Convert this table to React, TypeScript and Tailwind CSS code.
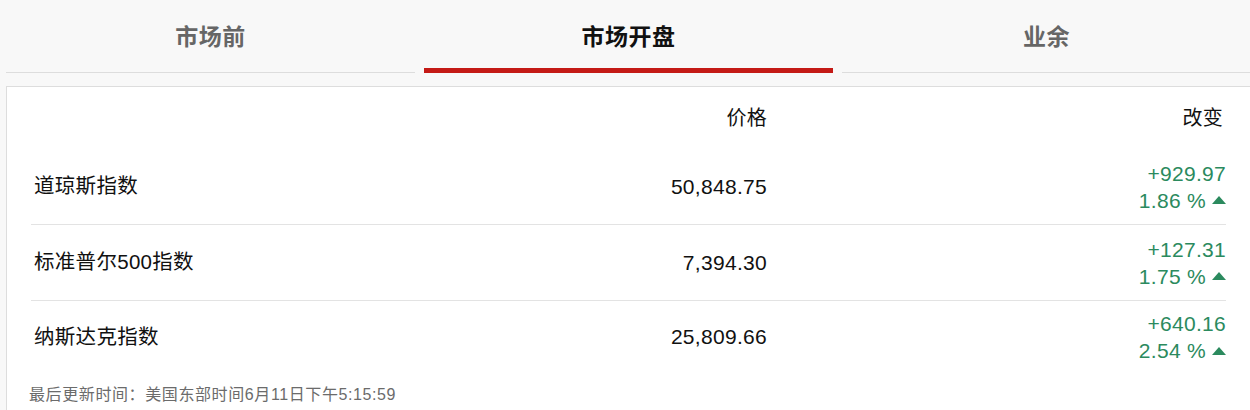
const rows = [
  { name: "道琼斯指数", price: "50,848.75", change: "+929.97", pct: "1.86 %" },
  { name: "标准普尔500指数", price: "7,394.30", change: "+127.31", pct: "1.75 %" },
  { name: "纳斯达克指数", price: "25,809.66", change: "+640.16", pct: "2.54 %" },
];

const tabs = [
  { label: "市场前", active: false },
  { label: "市场开盘", active: true },
  { label: "业余", active: false },
];

export default function App() {
  return (
    <div
      className="w-[1250px] h-[410px] overflow-hidden bg-[#f8f8f8]"
      style={{ fontFamily: '"Liberation Sans", "Noto Sans CJK SC", sans-serif' }}
    >
      <div className="ml-[6px] w-[1245px]">
        <div className="flex gap-[9px]">
          {tabs.map((tab) => (
            <div
              key={tab.label}
              className={
                tab.active
                  ? "flex-1 h-[73px] flex justify-center pt-[22px] border-b-[5px] border-[#c41a16]"
                  : "flex-1 h-[73px] flex justify-center pt-[22px] border-b border-[#dddddd]"
              }
            >
              <span
                className={
                  tab.active
                    ? "text-[23px] leading-[30px] font-bold tracking-[0.5px] text-[#111111]"
                    : "text-[23px] leading-[30px] font-bold tracking-[0.5px] text-[#666666]"
                }
              >
                {tab.label}
              </span>
            </div>
          ))}
        </div>

        <div className="mt-[13px] w-[1250px] border border-[#dddddd] bg-white pl-[24px] pb-[20px]">
          <div className="w-[1195px] text-[21px] tracking-[0.3px] text-[#111111]">
            <div className="flex h-[62px] items-center">
              <div className="w-[400px]" />
              <div className="w-[336px] text-right text-[20px]">价格</div>
              <div className="flex-1 text-right pr-[3px] text-[20px]">改变</div>
            </div>
            {rows.map((row, i) => (
              <div
                key={row.name}
                className={
                  i < rows.length - 1
                    ? "flex h-[76px] items-center border-b border-[#e3e3e3]"
                    : "flex h-[72px] items-center"
                }
              >
                <div className="w-[400px] pl-[3px] text-[20.5px]">{row.name}</div>
                <div className="w-[336px] text-right">{row.price}</div>
                <div className="flex-1 flex flex-col items-end leading-[27px] text-[#2b8a5e]">
                  <span>{row.change}</span>
                  <span className="flex items-center">
                    {row.pct}
                    <svg width="14" height="8" viewBox="0 0 14 8" className="ml-[6px]">
                      <path d="M7 0 L14 8 L0 8 Z" fill="#2b8a5e" />
                    </svg>
                  </span>
                </div>
              </div>
            ))}
          </div>
          <div className="-ml-[2px] pt-[11px] text-[16px] leading-[22px] tracking-[0.6px] text-[#6b6b6b]">
            最后更新时间：美国东部时间6月11日下午5:15:59
          </div>
        </div>
      </div>
    </div>
  );
}
